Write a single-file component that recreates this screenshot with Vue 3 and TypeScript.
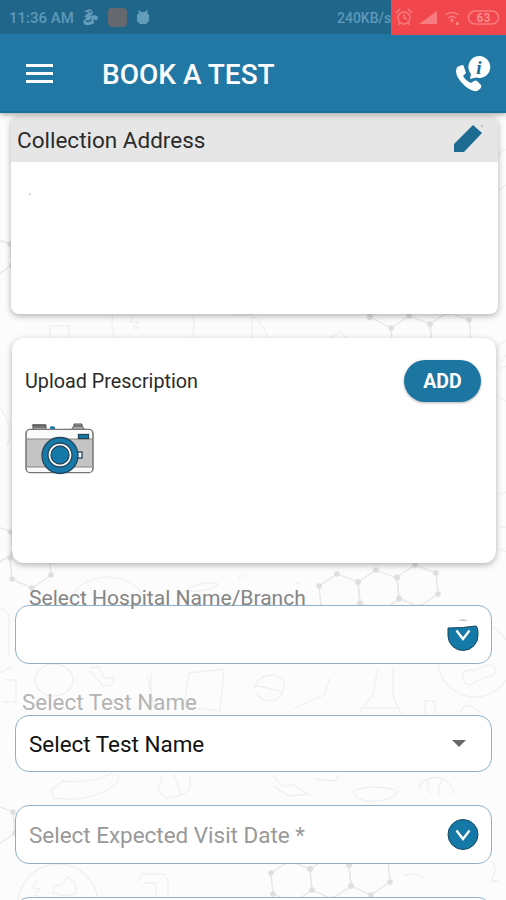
<script setup lang="ts">
import { ref } from 'vue'

interface Cell { x: number; y: number }

const title = 'BOOK A TEST'
const testName = ref('Select Test Name')

const hexPoints = ({ x, y }: Cell): Cell[] => [
  { x: x - 2, y: y - 21 }, { x: x + 19, y: y - 13 }, { x: x + 21, y: y + 8 },
  { x: x + 2, y: y + 21 }, { x: x - 18, y: y + 12 }, { x: x - 20, y: y - 9 },
]

const hexPath = (cell: Cell): string =>
  'M' + hexPoints(cell).map((p) => `${p.x} ${p.y}`).join('L') + 'Z'

const cells: Cell[] = [
  { x: 411, y: 337 }, { x: 450, y: 333 },
  { x: 339, y: 595 }, { x: 378, y: 591 }, { x: 417, y: 586 },
  { x: 30, y: 567 }, { x: -8, y: 545 }, { x: -9, y: 257 },
  { x: 291, y: 882 }, { x: 330, y: 878 }, { x: 369, y: 874 }, { x: -6, y: 825 },
]
</script>

<template>
  <main class="screen">
    <svg class="doodles" viewBox="0 0 506 900" aria-hidden="true">
      <g v-for="(cell, i) in cells" :key="i">
        <path class="bond" :d="hexPath(cell)" />
        <circle v-for="(p, j) in hexPoints(cell)" :key="j" class="atom" :cx="p.x" :cy="p.y" r="2.8" />
      </g>
      <path class="bond" d="M370 317l21 11" />
      <circle class="atom" cx="370" cy="317" r="3" />
      <circle cx="153" cy="324" r="41" />
      <path d="M134 315l-4 7h8l-5 6h7M232 315h20v24M50 338v-12h19v12M253 316q20 18 11 28M328 340l12-8 9 8" />
      <circle cx="517" cy="371" r="32" />
      <path d="M501 363l5-8M499 369l8-3M1 409q14 19 6 37M497 160q5-12 9-10M498 191l8-6M499 495l7-3M499 527h7M500 548l6 4" />
      <path d="M70 600a39 32 0 0 1 75 0M185 591q15-11 33-7-8 9-33 7ZM239 579l2-5M243 578l2-5M295 583h5" />
      <path d="M0 607l9 7v42M0 673l13-7M5 680h11v22H3M90 668l9-1 6 12 9-2-2 8-9 1-13-15M189 673l35-4-4 42-36-4ZM147 675l8 36M151 673v26" />
      <ellipse cx="54" cy="680" rx="19" ry="16" />
      <path d="M254 690c3-18 26-19 30-7 2 18-18 24-28 10M254 685l30 7M378 667l-5 27-14 20M393 667v29l8 18M360 708h38M425 714v-13h10v13M460 713q6-15 20 0M330 678l-6 17-30 13" />
      <circle cx="475" cy="660" r="37" />
      <path d="M464 680c-5-7 4-12 9-9l14-6c11-1 12 10 3 11l-14 5c-4 6-12 4-12-1Z" />
      <path d="M51 790l12-9q31 3 49-8 12 4 2 13-26 17-60 12ZM162 776l-4 14 8 8q18-1 24-10v-12M174 774l7 21M272 775l12 12 8-3 19 12M274 786l15 10 21-2M315 779l21 2 3-7M353 791q18-8 45 0-5 10-27 10-15 0-18-10ZM419 790q3-15 23-12 10 5 12 17M430 777q-5 8 1 17M444 779q-8 7-4 18" />
      <circle cx="58" cy="904" r="40" />
      <path d="M37 880l-4 8 7 1-5 6 6 2M54 886l8-1 5-8 7 5 3 11-11 3-13-3ZM137 882l5-8h22l4 7v15M144 883h12v14M404 875q17-3 20 4M492 861l4 8-5 12h8" />
    </svg>

    <div class="statusbar">
      <span class="clock">11:36 AM</span>
      <svg class="status-app" viewBox="0 0 18 18">
        <path d="M2 2l7-2 3 4-4 4q5-3 9 0l-1 4-4-1 1 4-5 2H3l-2-4 4-4-3-1 5-4Z" />
        <path class="cut" d="M4 12q4 3 6-2M8 2l1 2" />
      </svg>
      <span class="brown-app"></span>
      <svg class="status-bug" viewBox="0 0 14 16">
        <path d="M3 1l2 2h4l2-2 1 1-1 2 2 2v6l-3 3H4l-3-3V6l2-2-1-2Z" />
      </svg>
      <span class="speed">240KB/s</span>
      <div class="system">
        <svg viewBox="0 0 115 35">
          <g class="faint-line">
            <circle cx="13" cy="18" r="6" /><path d="M13 14v4l3 1M5 13l4-4M17 9l4 4M9 23l-2 2M17 23l2 2" />
            <path d="M54 15q7-5 14 0M57 18q4-3 8 0M60 21h2" />
            <rect x="77.500" y="11" width="30" height="13" rx="6.500" />
          </g>
          <path class="faint" d="M28 24L46 11v13ZM59 20l2-2 2 2-2 3ZM65 22h3v3h-3Z" />
          <text x="92.500" y="21.500" text-anchor="middle">63</text>
        </svg>
      </div>
    </div>

    <header class="appbar">
      <button class="menu" aria-label="Menu"><i></i><i></i><i></i></button>
      <h1>{{ title }}</h1>
      <svg class="call" viewBox="0 0 36 36">
        <path d="M2 11l5-2q2 0 2 2l2 6-3 3q3 5 8 7l3-2q2-1 3 0l4 4q1 2-1 4l-3 2q-5 1-12-5Q1 22 1 15Z" />
        <path d="M24 0a11 11 0 1 1-3 21.500l-6 1.500 1-5A11 11 0 0 1 24 0Z" />
        <text x="24" y="17.500" text-anchor="middle">i</text>
      </svg>
    </header>

    <section class="card address">
      <div class="card-head">
        <h2>Collection Address</h2>
        <svg class="pencil" viewBox="0 0 30 30">
          <path d="M0 19L19 0l9 8L10 27H0Z" /><path class="tip" d="M26 0h3v3Z" />
        </svg>
      </div>
      <p class="address-text">.</p>
    </section>

    <section class="card upload">
      <div class="upload-row">
        <h2>Upload Prescription</h2>
        <button class="add">ADD</button>
      </div>
      <svg class="camera" viewBox="0 0 70 52">
        <path class="metal" d="M8 7V2h13v5ZM46 7l3-4V1h8v2l3 4Z" />
        <path class="dark" d="M7 2h14M8 4h13M49 3h8" />
        <path class="blue" d="M25 7V4l2-1 3 1v3Z" />
        <rect class="body" x="1" y="6.500" width="67" height="43" rx="4" />
        <path class="white" d="M2 10q0-3 3-3h59q3 0 3 3v6H2ZM2 44h65v2q0 3-3 3H5q-3 0-3-3Z" />
        <path class="line" d="M2 16h65M2 44h65" />
        <rect class="blue edge" x="53.500" y="11.500" width="10" height="4" />
        <rect class="white edge" x="51" y="29" width="6" height="6" />
        <circle class="blue edge" cx="35" cy="32.500" r="18" />
        <circle class="white edge" cx="35" cy="32" r="12" />
        <circle class="blue edge" cx="35" cy="32" r="9" />
      </svg>
    </section>

    <form class="fields" @submit.prevent>
      <label class="hospital-label">Select Hospital Name/Branch</label>
      <div class="field hospital">
        <svg class="chevron" viewBox="0 0 32 34">
          <path class="cap" d="M11 3q5-4 10 0Z" />
          <path class="disc" d="M1 10q15 0 28-2 2 1 2 9a15 15 0 0 1-30 1Z" />
          <path class="arrow" d="M9.500 12.500l6.500 8.500 6.500-8.500" />
        </svg>
      </div>
      <label class="test-label">Select Test Name</label>
      <div class="field test">
        <span>{{ testName }}</span>
        <i class="caret"></i>
      </div>
      <div class="field date">
        <span>Select Expected Visit Date *</span>
        <svg class="chevron" viewBox="0 0 32 34">
          <circle class="disc" cx="16" cy="16.500" r="15" />
          <path class="arrow" d="M9.500 12.500l6.500 8.500 6.500-8.500" />
        </svg>
      </div>
      <div class="field next"></div>
    </form>
  </main>
</template>

<style>
body { margin: 0; }
</style>

<style scoped>
* { box-sizing: border-box; }
.screen {
  position: relative;
  display: flex;
  flex-direction: column;
  height: 900px;
  overflow: hidden;
  background: #fcfcfc;
  font-family: Roboto, "Liberation Sans", sans-serif;
  color: #2b2b2b;
}
.screen > * { position: relative; flex: none; }
.screen > .doodles {
  position: absolute;
  inset: 0;
  width: 506px;
  height: 900px;
  fill: none;
  stroke: #f0f0f0;
  stroke-width: 1.3;
}
.doodles .bond { stroke: #e6e6e6; }
.doodles .atom { fill: #dfdfdf; stroke: none; }
h1, h2, p { margin: 0; font-weight: 400; white-space: nowrap; }
button { border: 0; padding: 0; font-family: inherit; }

.statusbar {
  z-index: 2;
  display: flex;
  align-items: center;
  height: 34px;
  padding-left: 9px;
  background: #20668a;
  color: #5d99b8;
  font-weight: 500;
  white-space: nowrap;
}
.clock { width: 65px; font-size: 15px; padding-top: 1px; }
.status-app { width: 17px; height: 17px; margin-left: 8px; fill: #649dba; }
.cut { fill: none; stroke: #20668a; stroke-width: 1.5; }
.brown-app { width: 19px; height: 19px; margin-left: 9px; border-radius: 4px; background: #65686f; }
.status-bug { width: 14px; height: 16px; margin-left: 9px; fill: #649dba; }
.speed { width: 54px; margin-left: auto; padding-top: 1px; font-size: 14px; }
.system { align-self: flex-start; width: 115px; height: 35px; background: #f0464c; }
.system svg { display: block; width: 115px; height: 35px; }
.faint-line { fill: none; stroke: #f77c80; stroke-width: 1.5; }
.faint { fill: #f77c80; }
.system text { fill: #f98c8f; font-size: 12px; font-weight: 700; }

.appbar {
  z-index: 1;
  display: flex;
  align-items: center;
  height: 79px;
  padding: 2px 15px 0 26px;
  background: #2178a4;
  border-bottom: 2px solid #14709c;
  box-shadow: 0 2px 5px rgba(0, 0, 0, .3);
  color: #fff;
}
.menu { display: flex; flex-direction: column; gap: 5px; width: 27px; background: none; }
.menu i { height: 3px; background: #fff; }
.appbar h1 { margin-left: 49px; padding-top: 2px; font-size: 28px; font-weight: 500; line-height: 32px; }
.call { width: 36px; height: 36px; margin-left: auto; fill: #fff; }
.call text { fill: #17688f; font: italic 700 19px "Liberation Serif", serif; }

.card { background: #fff; box-shadow: 0 2px 6px rgba(0, 0, 0, .3); }
.address { width: 487px; height: 198px; margin: 3px 0 0 11px; border-radius: 8px; overflow: hidden; }
.card-head {
  display: flex;
  align-items: center;
  justify-content: space-between;
  height: 46px;
  padding: 2px 14px 0 6px;
  background: #e6e6e6;
}
.card-head h2 { font-size: 22.500px; }
.pencil { width: 30px; height: 30px; fill: #1c6b91; }
.tip { fill: #bdbdbd; }
.address-text { padding: 22px 0 0 17px; font-size: 12px; color: #aaa; }
.upload { width: 484px; height: 225px; margin: 24px 0 0 12px; padding: 22px 15px 0 13px; border-radius: 12px; }
.upload-row { display: flex; align-items: center; justify-content: space-between; height: 42px; }
.upload-row h2 { font-size: 19.800px; }
.add {
  width: 77px;
  height: 42px;
  border-radius: 21px;
  background: #1d76a2;
  box-shadow: 0 1px 3px rgba(0, 0, 0, .3);
  color: #fff;
  font-size: 19.500px;
  font-weight: 700;
}
.camera { display: block; width: 70px; height: 52px; margin-top: 21px; }
.metal { fill: #aaa; stroke: #555; }
.dark { fill: none; stroke: #444; }
.body { fill: #c4c4c4; stroke: #777; stroke-width: 1.5; }
.white { fill: #fafafa; }
.line { stroke: #888; }
.blue { fill: #157aa9; }
.edge { stroke: #24465a; stroke-width: 1.3; }

.fields { display: flex; flex-direction: column; padding: 0 14px 0 15px; }
.fields label { white-space: nowrap; line-height: 26px; }
.hospital-label { z-index: 1; height: 20px; margin: 22px 0 0 14px; font-size: 21.050px; color: #858585; }
.fields .test-label { height: 26px; margin: 25px 0 0 7px; font-size: 22.400px; color: #b4b4b4; }
.field {
  display: flex;
  align-items: center;
  justify-content: space-between;
  border: 1px solid #8fb0c8;
  border-radius: 14px;
  background: #fff;
  padding: 0 12px 0 13px;
  font-size: 22.450px;
  white-space: nowrap;
}
.hospital { height: 59px; }
.test { height: 57px; color: #111; }
.date { height: 59px; margin-top: 33px; color: #999; }
.next { height: 59px; margin-top: 33px; }
.chevron { width: 32px; height: 34px; margin-left: auto; }
.disc { fill: #1579a8; stroke: #17465f; stroke-width: 1; }
.cap { fill: #ccc; }
.arrow { fill: none; stroke: #fff; stroke-width: 2.3; }
.caret { margin-right: 13px; border: solid transparent; border-width: 7px 7px 0; border-top-color: #686868; }
</style>
